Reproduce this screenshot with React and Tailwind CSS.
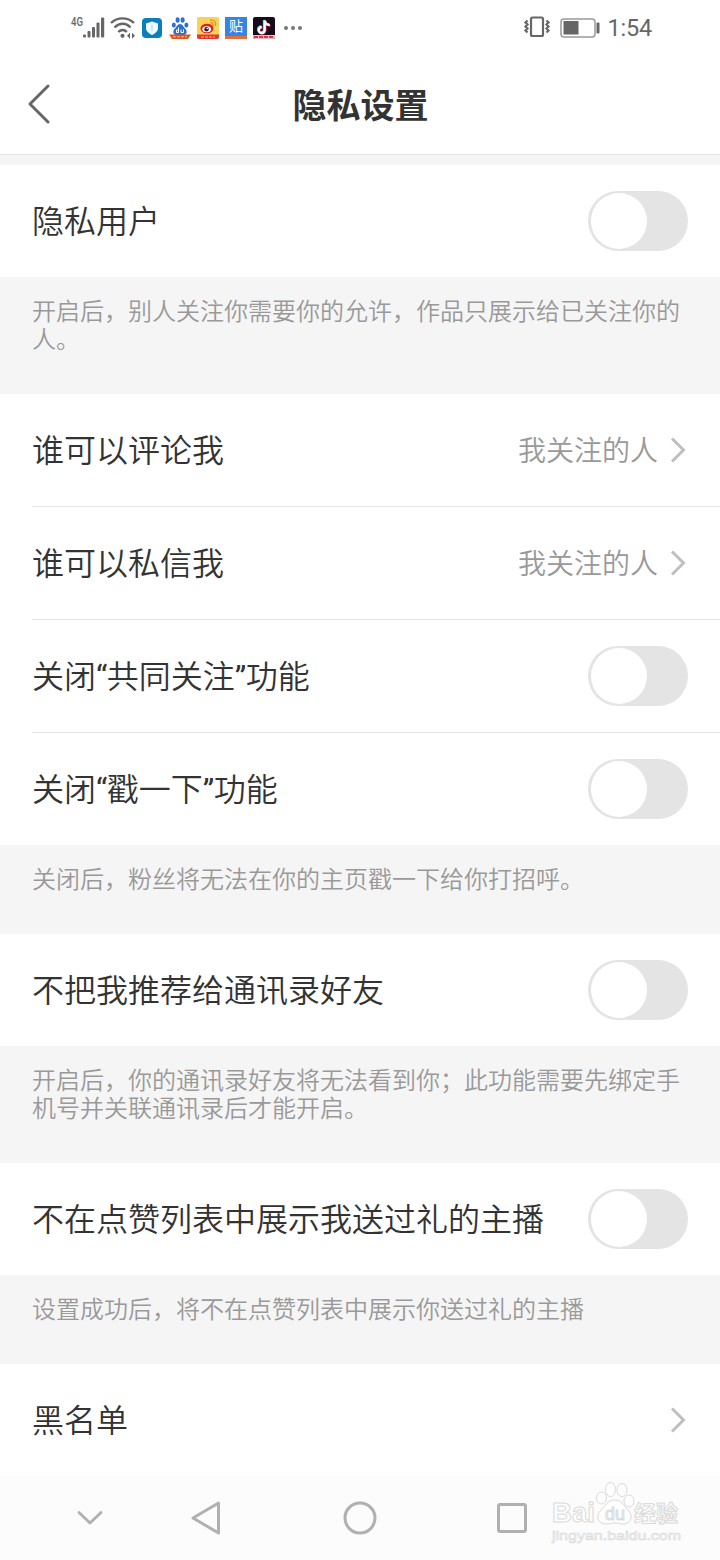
import { useState } from "react";

const SECTIONS = [
  {
    id: "private",
    rows: [{ id: "private-user", label: "隐私用户", type: "switch" }],
    note: ["开启后，别人关注你需要你的允许，作品只展示给已关注你的", "人。"],
  },
  {
    id: "social",
    rows: [
      { id: "comment", label: "谁可以评论我", type: "link", value: "我关注的人" },
      { id: "message", label: "谁可以私信我", type: "link", value: "我关注的人" },
      { id: "mutual", label: "关闭“共同关注”功能", type: "switch" },
      { id: "poke", label: "关闭“戳一下”功能", type: "switch" },
    ],
    note: ["关闭后，粉丝将无法在你的主页戳一下给你打招呼。"],
  },
  {
    id: "contacts",
    rows: [{ id: "recommend", label: "不把我推荐给通讯录好友", type: "switch" }],
    note: ["开启后，你的通讯录好友将无法看到你；此功能需要先绑定手", "机号并关联通讯录后才能开启。"],
  },
  {
    id: "gifts",
    rows: [{ id: "gift-list", label: "不在点赞列表中展示我送过礼的主播", type: "switch" }],
    note: ["设置成功后，将不在点赞列表中展示你送过礼的主播"],
  },
  {
    id: "blacklist",
    rows: [{ id: "blacklist", label: "黑名单", type: "link" }],
  },
];

function StatusBar() {
  return (
    <div className="h-[55px] flex items-center justify-between pl-[70px] pr-[68px] text-[#666]">
      <div className="flex items-center">
        {/* Signal */}
        <svg width="36" height="26" viewBox="0 0 36 26" fill="currentColor">
          <text x="1" y="11" fontSize="12" fontWeight="500" fontFamily="Roboto, sans-serif" textLength="12" lengthAdjust="spacingAndGlyphs">4G</text>
          <rect x="13" y="19.500" width="3" height="3" rx="1" />
          <rect x="17.500" y="16" width="3" height="6.500" rx="1" />
          <rect x="22" y="12" width="3" height="10.500" rx="1" />
          <rect x="26.500" y="7.500" width="3" height="15" rx="1" />
          <rect x="31" y="2.500" width="3.200" height="20" rx="1" />
        </svg>
        {/* Wifi */}
        <svg className="ml-1" width="27" height="26" viewBox="0 0 27 26" fill="none" stroke="currentColor" strokeWidth="2.400">
          <path d="M1 8C7.500 1.800 17.500 1.800 24 8" />
          <path d="M4.500 12.500C9.500 7.500 16 7.500 20.500 12.500" />
          <path d="M8.300 17C11 14.300 14.500 14.300 16.800 17" />
          <circle cx="12.500" cy="20.800" r="2.100" fill="currentColor" stroke="none" />
          <path d="M17 20.800l3-3v6zM25 20.800l-3-3v6z" fill="currentColor" stroke="none" />
        </svg>
        <div className="flex items-center gap-[6px] ml-[4px]">
          {/* Shield */}
          <svg width="22" height="22" viewBox="0 0 22 22">
            <rect x="1" y="1" width="20" height="20" rx="4" fill="#0b7fbd" />
            <path d="M11 4.500l6 2v4.500c0 3.500-3 5.500-6 7-3-1.500-6-3.500-6-7V6.500z" fill="#eefaff" />
            <path d="M11 8v6" stroke="#9ed5ec" strokeWidth="1" />
          </svg>
          {/* Baidu */}
          <svg width="22" height="24" viewBox="0 0 22 24">
            <g fill="#2b6fd6">
              <ellipse cx="4.800" cy="9" rx="2" ry="2.600" />
              <ellipse cx="8.600" cy="4" rx="2" ry="2.800" />
              <ellipse cx="13.600" cy="4" rx="2" ry="2.800" />
              <ellipse cx="17.400" cy="9" rx="2" ry="2.600" />
              <path d="M11 8c2.500 0 3.500 3 5.500 5s1.500 6-2 6h-7c-3.500 0-4-4-2-6s3-5 5.500-5z" />
            </g>
            <path d="M9.500 11.500v5H7.500v-2.500h2M12 13.500v3h2.500v-3" stroke="#fff" fill="none" />
            <path d="M0 18.500h22l-3 4.500H3z" fill="#d9571c" />
            <path d="M4 20.800h14" stroke="#f5b58c" strokeDasharray="3 1" />
          </svg>
          {/* Weibo */}
          <svg width="22" height="24" viewBox="0 0 22 24">
            <rect y="1" width="22" height="22" rx="2" fill="#fbd15a" />
            <ellipse cx="10" cy="12.500" rx="6.500" ry="4.800" fill="#d9251f" />
            <ellipse cx="9.700" cy="13.200" rx="4.400" ry="3" fill="#fff" />
            <circle cx="9.500" cy="13.200" r="2.200" fill="#222" />
            <circle cx="10.200" cy="12.500" r=".8" fill="#fff" />
            <path d="M13 4c4-1 6.500 2 5.500 6M13.500 6.500c2 0 3 1.300 2.500 3.200" stroke="#ee8e2c" strokeWidth="1.300" fill="none" />
            <path d="M0 18.500h22V21a2 2 0 0 1-2 2H2a2 2 0 0 1-2-2z" fill="#e2382b" />
            <path d="M4 21h14" stroke="#f5b58c" strokeDasharray="3 1" />
          </svg>
          {/* Tieba */}
          <div className="w-[22px] h-[22px] bg-[#3385e8] flex flex-col items-center justify-between overflow-hidden">
            <span className="text-[14px] leading-[19px] text-white">贴</span>
            <span className="w-full h-[3px] shrink-0 bg-[#e0713c]" />
          </div>
          {/* Douyin */}
          <svg width="22" height="24" viewBox="0 0 22 24">
            <rect y="1" width="22" height="22" rx="2" fill="#170b1c" />
            <g fill="none" strokeWidth="2.300">
              <path d="M11 4v9.500a3 3 0 1 1-3-3M11 4c.5 3 2.500 4.500 5 4.500" stroke="#25d6dc" />
              <path d="M12.400 5v9.500a3 3 0 1 1-3-3M12.400 5c.5 3 2.500 4.500 5 4.500" stroke="#ee2c58" />
              <path d="M11.700 4.500v9.500a3 3 0 1 1-3-3M11.700 4.500c.5 3 2.500 4.500 5 4.500" stroke="#fff" />
            </g>
            <path d="M0 19h22v2a2 2 0 0 1-2 2H2a2 2 0 0 1-2-2z" fill="#f4bcc2" />
            <path d="M1 21h20" stroke="#e72d45" strokeWidth="2" strokeDasharray="4 1" />
          </svg>
        </div>
        <div className="flex gap-[3px] ml-[9px]">
          <span className="size-[4px] rounded-full bg-[#777]" />
          <span className="size-[4px] rounded-full bg-[#777]" />
          <span className="size-[4px] rounded-full bg-[#777]" />
        </div>
      </div>
      <div className="flex items-center">
        {/* Vibrate */}
        <svg width="28" height="24" viewBox="0 0 28 24" fill="none" stroke="currentColor">
          <rect x="8" y="1.500" width="12" height="18.500" rx="1.500" strokeWidth="2.200" />
          <path d="M4.500 4.500L2.500 6.500 4.500 8.500 2.500 10.500 4.500 12.500 2.500 14.500 4.500 16.500M23.500 4.500l2 2-2 2 2 2-2 2 2 2-2 2" strokeWidth="2.200" />
        </svg>
        {/* Battery */}
        <svg className="ml-[9px]" width="40" height="20" viewBox="0 0 40 20" fill="none">
          <rect x="1" y="1" width="34" height="18" rx="3" stroke="#999" strokeWidth="1.500" />
          <rect x="3.500" y="3" width="15" height="13.500" fill="#666" />
          <rect x="36.500" y="4.500" width="3" height="11" rx="1" fill="#666" />
        </svg>
        <span className="ml-[7px] text-[23.500px] leading-none tracking-[-0.2px] pt-[3px]">1:54</span>
      </div>
    </div>
  );
}

function Header() {
  return (
    <header className="h-[100px] grid grid-cols-[80px_1fr_80px] items-center border-b border-[#e3e3e3]">
      <button className="pl-[26px] pb-[2px]">
        <svg width="26" height="42" viewBox="0 0 26 42" fill="none" stroke="#666" strokeWidth="3" strokeLinecap="round" strokeLinejoin="round">
          <path d="M22 3L4 21l18 18" />
        </svg>
      </button>
      <h1 className="pt-[3px] pl-px text-center text-[34px] leading-none font-bold text-[#333]">隐私设置</h1>
    </header>
  );
}

function Switch({ on, onToggle }) {
  return (
    <button
      role="switch"
      aria-checked={on}
      onClick={onToggle}
      className={`w-[100px] h-[60px] p-[2px] rounded-full flex items-center flex-shrink-0 ${
        on ? "bg-[#ff5000] justify-end" : "bg-[#e4e4e4] justify-start"
      }`}>
      <span className="size-[56px] ml-px rounded-full bg-white" />
    </button>
  );
}

function Chevron() {
  return (
    <svg className="ml-[10px]" width="20" height="28" viewBox="0 0 20 28" fill="none" stroke="#bfbfbf" strokeWidth="3">
      <path d="M4 2.500L15.500 14 4 25.500" />
    </svg>
  );
}

function Row({ row, on, onToggle }) {
  return (
    <div className="h-[112px] pl-8 pr-8 flex items-center justify-between">
      <span className="pt-[2px] text-[32px] leading-none font-[350] text-[#333] whitespace-nowrap">
        {row.label.split(/([“”])/).map((part, i) =>
          part === "“" || part === "”" ? (
            <span key={i} className="font-normal tracking-[-0.5px]">{part}</span>
          ) : (
            part
          )
        )}
      </span>
      {row.type === "switch" ? (
        <Switch on={on} onToggle={onToggle} />
      ) : (
        <div className="flex items-center">
          {row.value && <span className="pt-[3px] text-[28px] leading-none font-[350] text-[#999]">{row.value}</span>}
          <Chevron />
        </div>
      )}
    </div>
  );
}

function NavBar() {
  return (
    <nav className="h-[84px] bg-[#fcfcfc] flex items-center pl-[74px]">
      <svg width="32" height="36" viewBox="0 0 32 36" fill="none" stroke="#b0b0b0" strokeWidth="2.800" strokeLinecap="round" strokeLinejoin="round">
        <path d="M5 12.500l11 10.500 11-10.500" />
      </svg>
      <svg className="ml-[83px]" width="36" height="36" viewBox="0 0 36 36" fill="none" stroke="#b0b0b0" strokeWidth="3" strokeLinejoin="round">
        <path d="M29.500 3v30L4 18z" />
      </svg>
      <svg className="ml-[117px]" width="36" height="36" viewBox="0 0 36 36" fill="none" stroke="#b0b0b0" strokeWidth="3">
        <circle cx="18" cy="18" r="15" />
      </svg>
      <svg className="ml-[116px]" width="36" height="36" viewBox="0 0 36 36" fill="none" stroke="#b0b0b0" strokeWidth="3">
        <rect x="4.500" y="4.500" width="27" height="27" rx="1.500" />
      </svg>
      {/* Watermark */}
      <svg className="ml-[20px]" width="136" height="72" viewBox="0 0 136 72" fill="#fefefe" stroke="#d9d9d9" strokeWidth="1">
        <text x="2" y="40" fontSize="28" fontWeight="700" fontFamily="Liberation Sans, sans-serif" textLength="43" lengthAdjust="spacingAndGlyphs">Bai</text>
        <ellipse cx="51.500" cy="16" rx="5" ry="6" />
        <ellipse cx="60.500" cy="7.500" rx="5" ry="7" />
        <ellipse cx="72" cy="8" rx="5" ry="6.500" />
        <ellipse cx="79" cy="19" rx="5" ry="6" />
        <path d="M65 18c7 0 8 5 13 10 6 6 3 14-5 14-4 0-5-1-8-1s-5 1-9 1c-8 0-11-8-5-14 5-5 7-10 14-10z" />
        <text x="55" y="38" fontSize="18" fontFamily="Liberation Sans, sans-serif" textLength="20" lengthAdjust="spacingAndGlyphs">du</text>
        <text x="84" y="39" fontSize="22" fontWeight="700" fontFamily="Noto Sans CJK SC, sans-serif">经验</text>
        <text x="2" y="58" fontSize="13" strokeWidth=".6" fontFamily="Liberation Sans, sans-serif" textLength="129" lengthAdjust="spacingAndGlyphs">jingyan.baidu.com</text>
      </svg>
    </nav>
  );
}

export default function App() {
  const [enabled, setEnabled] = useState({});

  const toggle = (id) =>
    setEnabled((prev) => ({ ...prev, [id]: !prev[id] }));

  return (
    <div className="w-[720px] h-[1560px] overflow-hidden bg-white font-[Roboto,'Noto_Sans_CJK_SC',sans-serif]" lang="zh-CN">
      <StatusBar />
      <Header />
      <main className="bg-[#f5f5f5] pt-[10px] h-[1321px]">
        {SECTIONS.map((section) => (
          <section key={section.id}>
            <div className="bg-white">
              {section.rows.map((row, i) => (
                <div key={row.id}>
                  {i > 0 && <div className="ml-8 h-px bg-[#e5e5e5]" />}
                  <Row row={row} on={!!enabled[row.id]} onToggle={() => toggle(row.id)} />
                </div>
              ))}
            </div>
            {section.note && (
              <div className="px-8 pt-[21px] pb-10 text-[24px] leading-[28px] font-[350] text-[#999] whitespace-nowrap">
                {section.note.map((line) => (
                  <p key={line}>{line}</p>
                ))}
              </div>
            )}
          </section>
        ))}
      </main>
      <NavBar />
    </div>
  );
}
